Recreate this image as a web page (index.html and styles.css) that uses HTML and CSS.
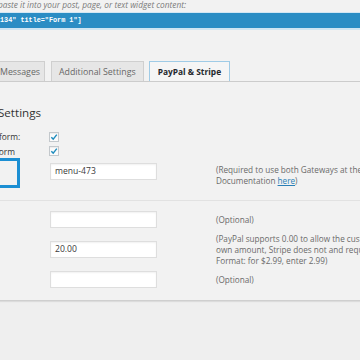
FILE: index.html
```html
<!DOCTYPE html>
<html>
<head>
<meta charset="utf-8">
<link rel="stylesheet" href="styles.css">
</head>
<body>
<div class="panel">
  <p class="hint">paste it into your post, page, or text widget content:</p>
  <div class="code">134" title="Form 1"]</div>
  <div class="code-under"></div>

  <nav class="tabs">
    <span class="tab tab-clip">Messages</span>
    <span class="tab">Additional Settings</span>
    <span class="tab active">PayPal &amp; Stripe</span>
  </nav>

  <h2 class="heading">Settings</h2>

  <div class="row row-check1">
    <div class="th"><span class="label l1">form:</span></div>
    <div class="td"><span class="check"><svg viewBox="0 0 10 10" width="10" height="10"><path d="M2.3 5.2 L4.2 7.1 L7.8 2.6" fill="none" stroke="#1e8cbe" stroke-width="1.4"/></svg></span></div>
  </div>
  <div class="row row-check2">
    <div class="th"><span class="label l2">form</span></div>
    <div class="td"><span class="check"><svg viewBox="0 0 10 10" width="10" height="10"><path d="M2.3 5.2 L4.2 7.1 L7.8 2.6" fill="none" stroke="#1e8cbe" stroke-width="1.4"/></svg></span></div>
  </div>
  <div class="row row-main">
    <div class="th"><div class="focus-box"></div></div>
    <div class="td"><div class="input">menu-473</div></div>
    <div class="desc">(Required to use both Gateways at the same time. See the<br>Documentation <a href="#">here</a>)</div>
  </div>

  <div class="sep"></div>

  <div class="row row-a">
    <div class="th"></div>
    <div class="td"><div class="input"></div></div>
    <div class="desc">(Optional)</div>
  </div>
  <div class="row row-b">
    <div class="th"></div>
    <div class="td"><div class="input">20.00</div></div>
    <div class="desc">(PayPal supports 0.00 to allow the customer to enter their<br>own amount, Stripe does not and requires a minimum.<br>Format: for $2.99, enter 2.99)</div>
  </div>
  <div class="row row-c">
    <div class="th"></div>
    <div class="td"><div class="input"></div></div>
    <div class="desc">(Optional)</div>
  </div>
</div>
</body>
</html>
```
FILE: styles.css
```css
html, body {
  margin: 0;
  padding: 0;
}
body {
  width: 360px;
  height: 360px;
  overflow: hidden;
  background: #efefef;
  font-family: "Open Sans", "Noto Sans", sans-serif;
  color: #444;
}
.panel {
  background: #f2f2f2;
  height: 300px;
  border-bottom: 1px solid #cfcfcf;
  box-shadow: 0 1px 1px rgba(0,0,0,0.08);
  overflow: hidden;
}
.hint {
  margin: 0 0 0 -2px;
  height: 12px;
  font-size: 8.3px;
  line-height: 10px;
  font-style: italic;
  color: #7a7a7a;
  white-space: nowrap;
}
.code {
  height: 15px;
  padding-left: 0;
  border-top: 1px solid #d4e7f3;
  background: #2b8dc4;
  color: #fff;
  font-family: "Liberation Mono", "DejaVu Sans Mono", monospace;
  font-size: 6.8px;
  font-weight: 700;
  line-height: 15px;
  white-space: nowrap;
}
.code-under {
  height: 2px;
  background: #cfe5f2;
}
.tabs {
  display: flex;
  margin-top: 31px;
  height: 20px;
  border-bottom: 1px solid #cccccc;
}
.tab {
  display: flex;
  align-items: center;
  box-sizing: border-box;
  height: 20px;
  padding: 0 7px;
  margin-right: 5px;
  background: #e6e6e6;
  border: 1px solid #cfcfcf;
  border-bottom: none;
  font-size: 8.8px;
  color: #666;
  white-space: nowrap;
}
.tab-clip {
  margin-left: -8px;
  padding-right: 4px;
  margin-right: 6px;
}
.tab.active {
  background: #f5f5f5;
  border: 1px solid #9fcbe6;
  border-bottom: none;
  color: #23282d;
  font-weight: 700;
  font-size: 8.4px;
  padding: 0 8px 0 8px;
}
.heading {
  margin: 24px 0 0 -2px;
  font-size: 11.6px;
  line-height: 14px;
  font-weight: 400;
  color: #333;
}
.row {
  display: grid;
  grid-template-columns: 50px 106px auto;
  align-items: center;
}
.th {
  height: 100%;
  display: flex;
  align-items: center;
  overflow: visible;
}
.label {
  font-size: 8.4px;
  color: #333;
  white-space: nowrap;
}
.l1 { margin-left: -1px; }
.l2 { margin-left: -4px; }
.row-check1 { margin-top: 9px; height: 15px; }
.row-check2 { height: 14px; }
.check {
  display: block;
  box-sizing: border-box;
  width: 10px;
  height: 10px;
  margin-left: -1px;
  background: #fbfbfb;
  border: 1px solid #c3c8cc;
  box-shadow: inset 0 1px 1px rgba(0,0,0,0.06);
}
.check svg {
  display: block;
  margin: -1px 0 0 -1px;
}
.row-main {
  height: 30px;
}
.focus-box {
  box-sizing: border-box;
  width: 32px;
  height: 30px;
  margin-left: -12px;
  border: 3px solid #1c8fd3;
}
.input {
  box-sizing: border-box;
  width: 107px;
  height: 17px;
  background: #ffffff;
  border: 1px solid #dedede;
  box-shadow: inset 0 1px 2px rgba(0,0,0,0.06);
  font-size: 8.6px;
  line-height: 15px;
  padding-left: 4px;
  color: #3a3a3a;
}
.row-main .input {
  margin-top: -4px;
}
.desc {
  padding-left: 60px;
  font-size: 8.2px;
  line-height: 11px;
  color: #6a6a6a;
  white-space: nowrap;
}
.row-main .desc {
  margin-top: 3px;
}
.desc a {
  color: #2a7fb6;
  text-decoration: underline;
}
.sep {
  margin-top: 12px;
  height: 1px;
  background: #e2e2e2;
}
.row-a { margin-top: 10px; }
.row-b { margin-top: 5px; }
.row-c { margin-top: 5px; }
```
